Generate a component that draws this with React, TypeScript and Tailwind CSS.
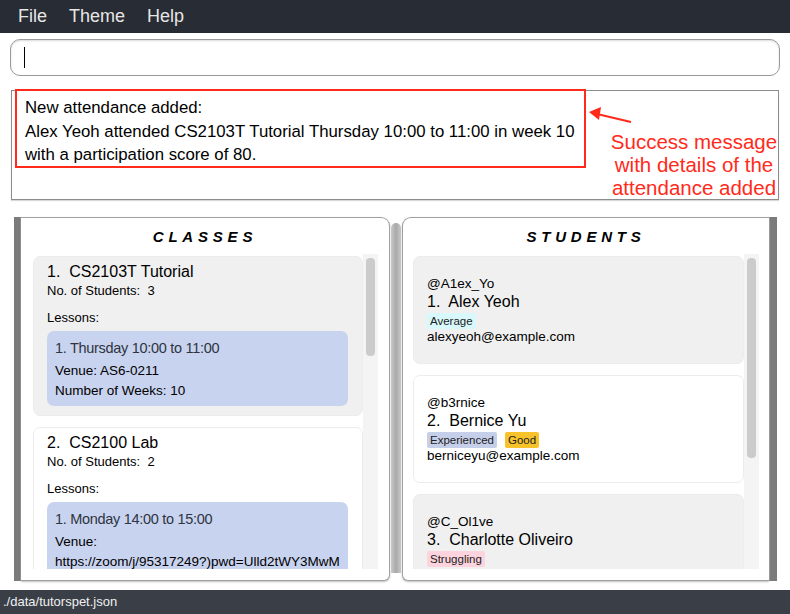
const font = { fontFamily: '"Liberation Sans", Arial, sans-serif' };

type Lesson = { title: string; venue: string[]; weeks?: string };
type Klass = { name: string; students: number; lessons: Lesson[]; shaded: boolean };
type Tag = { label: string; cls: string };
type Student = { handle: string; name: string; tags: Tag[]; email: string; shaded: boolean };

const classes: Klass[] = [
  {
    name: "1.  CS2103T Tutorial",
    students: 3,
    shaded: true,
    lessons: [{ title: "1. Thursday 10:00 to 11:00", venue: ["Venue: AS6-0211"], weeks: "Number of Weeks: 10" }],
  },
  {
    name: "2.  CS2100 Lab",
    students: 2,
    shaded: false,
    lessons: [
      {
        title: "1. Monday 14:00 to 15:00",
        venue: ["Venue:", "https://zoom/j/95317249?)pwd=Ulld2tWY3MwM"],
        weeks: "Number of Weeks: 13",
      },
    ],
  },
];

const students: Student[] = [
  {
    handle: "@A1ex_Yo",
    name: "1.  Alex Yeoh",
    tags: [{ label: "Average", cls: "bg-[#d8f8fb]" }],
    email: "alexyeoh@example.com",
    shaded: true,
  },
  {
    handle: "@b3rnice",
    name: "2.  Bernice Yu",
    tags: [
      { label: "Experienced", cls: "bg-[#c6cfea]" },
      { label: "Good", cls: "bg-[#f7c22a]" },
    ],
    email: "berniceyu@example.com",
    shaded: false,
  },
  {
    handle: "@C_Ol1ve",
    name: "3.  Charlotte Oliveiro",
    tags: [{ label: "Struggling", cls: "bg-[#fdd3de]" }],
    email: "charlotte@example.com",
    shaded: true,
  },
];

function ClassCard({ c }: { c: Klass }) {
  return (
    <div
      className={`shrink-0 rounded-[7px] border border-[#ececec] pl-[13px] pr-[14px] pt-[5px] pb-[9px] ${
        c.shaded ? "bg-[#f0f0f0]" : "bg-white"
      }`}
    >
      <div className="whitespace-pre text-[16px] leading-[20px] text-black">{c.name}</div>
      <div className="whitespace-pre text-[13px] leading-[18px] text-black">No. of Students:  {c.students}</div>
      <div className="mt-[9px] text-[13px] leading-[18px] text-black">Lessons:</div>
      {c.lessons.map((l) => (
        <div key={l.title} className="mt-[4px] rounded-[7px] bg-[#c8d3ef] px-[8px] pt-[6px] pb-[5px]">
          <div className="text-[14.5px] leading-[22px] tracking-[-0.3px] text-[#2e3440]">{l.title}</div>
          <div className="mt-[2px] text-[13.5px] leading-[20px] text-black">
            {l.venue.map((v) => (
              <div key={v}>{v}</div>
            ))}
          </div>
          {l.weeks && <div className="text-[13.5px] leading-[20px] text-black">{l.weeks}</div>}
        </div>
      ))}
    </div>
  );
}

function StudentCard({ s }: { s: Student }) {
  return (
    <div
      className={`shrink-0 rounded-[7px] border border-[#ececec] pl-[13px] pt-[19px] pb-[18px] ${
        s.shaded ? "bg-[#f0f0f0]" : "bg-white"
      }`}
    >
      <div className="text-[13.5px] leading-[16px] text-black">{s.handle}</div>
      <div className="whitespace-pre text-[16px] leading-[20px] text-black">{s.name}</div>
      <div className="mt-[1px] flex gap-[8px]">
        {s.tags.map((t) => (
          <span key={t.label} className={`rounded-[2px] px-[3px] text-[11.5px] leading-[16px] text-[#222] ${t.cls}`}>
            {t.label}
          </span>
        ))}
      </div>
      <div className="text-[13.5px] leading-[16px] text-black">{s.email}</div>
    </div>
  );
}

function Scrollbar({ thumb }: { thumb: string }) {
  return (
    <div className="w-[15px] shrink-0 bg-[#f4f4f4] px-[3px] pt-[4px]">
      <div className={`w-[9px] rounded-[4px] bg-[#cbcbcb] ${thumb}`} />
    </div>
  );
}

export default function App() {
  return (
    <div className="flex h-[614px] w-[790px] flex-col overflow-hidden bg-white" style={font}>
      {/* menu bar */}
      <div className="flex h-[33px] shrink-0 items-center gap-[22px] bg-[#282c34] pl-[18px] text-[18px] text-[#e6e6e6]">
        <span>File</span>
        <span>Theme</span>
        <span>Help</span>
      </div>

      {/* command box */}
      <div className="mx-[10px] mt-[6px] flex h-[37px] shrink-0 items-center rounded-[10px] border border-[#9a9a9a] pl-[13px] shadow-[inset_0_1px_2px_rgba(0,0,0,0.15)]">
        <div className="h-[21px] w-[1px] bg-black" />
      </div>

      {/* result display */}
      <div className="mx-[11px] mt-[14px] flex h-[110px] shrink-0 border border-[#8c8c8c] shadow-[0_1px_1px_rgba(0,0,0,0.15)]">
        <div className="ml-[3px] -mt-[2px] h-[79px] w-[571px] shrink-0 whitespace-nowrap border-[2px] border-[#ff2a1a] pl-[8px] pt-[5px] text-[16.8px] leading-[23.5px] text-black">
          <div>New attendance added:</div>
          <div>Alex Yeoh attended CS2103T Tutorial Thursday 10:00 to 11:00 in week 10</div>
          <div>with a participation score of 80.</div>
        </div>
        <div className="flex min-w-0 flex-1 flex-col">
          <svg width="50" height="20" viewBox="0 0 50 20" className="ml-[1px] mt-[13px]">
            <line x1="44" y1="18" x2="10" y2="10" stroke="#ff2a1a" strokeWidth="2" />
            <polygon points="2,8 14,3 12,16" fill="#ff2a1a" />
          </svg>
          <div className="mt-[6px] whitespace-nowrap pl-[24px] text-center text-[20.5px] leading-[23px] text-[#ff2a1a]">
            <div>Success message</div>
            <div>with details of the</div>
            <div>attendance added</div>
          </div>
        </div>
      </div>

      {/* panels */}
      <div className="mt-[17px] ml-[14px] flex h-[364px] w-[763px] shrink-0">
        <div className="w-[7px] shrink-0 border-r border-[#9a9a9a] bg-[#7b7b7b]" />
        <div className="flex w-[369px] shrink-0 flex-col overflow-hidden rounded-tr-[9px] rounded-br-[6px] border border-l-0 border-[#a0a0a0] bg-white pb-[11px] shadow-[0_1px_2px_rgba(0,0,0,0.25)]">
          <div className="h-[36px] shrink-0 pt-[8px] text-center text-[15px] font-bold italic tracking-[0.32em] text-black">
            CLASSES
          </div>
          <div className="flex min-h-0 flex-1 pl-[12px]">
            <div className="flex min-w-0 flex-1 flex-col gap-[11px] overflow-hidden pt-[2px]">
              {classes.map((c) => (
                <ClassCard key={c.name} c={c} />
              ))}
            </div>
            <Scrollbar thumb="h-[98px]" />
            <div className="w-[11px] shrink-0" />
          </div>
        </div>
        <div className="mx-[1px] mt-[6px] mb-[8px] w-[10px] shrink-0 rounded-t-[5px] bg-[linear-gradient(90deg,#c9c9c9,#a9a9a9_50%,#c9c9c9)]" />
        <div className="flex w-[367px] shrink-0 flex-col overflow-hidden rounded-tl-[9px] rounded-bl-[6px] border border-r-0 border-[#a0a0a0] bg-white pb-[11px] shadow-[0_1px_2px_rgba(0,0,0,0.25)]">
          <div className="h-[36px] shrink-0 pt-[8px] text-center text-[15px] font-bold italic tracking-[0.32em] text-black">
            STUDENTS
          </div>
          <div className="flex min-h-0 flex-1 pl-[10px]">
            <div className="flex min-w-0 flex-1 flex-col gap-[11px] overflow-hidden pt-[2px]">
              {students.map((s) => (
                <StudentCard key={s.handle} s={s} />
              ))}
            </div>
            <Scrollbar thumb="h-[200px]" />
            <div className="w-[10px] shrink-0" />
          </div>
        </div>
        <div className="w-[8px] shrink-0 border-l border-[#9a9a9a] bg-[#7b7b7b]" />
      </div>

      <div className="flex-1" />

      {/* status bar */}
      <div className="flex h-[24px] shrink-0 items-center bg-[#3a3f47] pl-[3px] text-[13px] text-[#f0f0f0]">
        ./data/tutorspet.json
      </div>
    </div>
  );
}
